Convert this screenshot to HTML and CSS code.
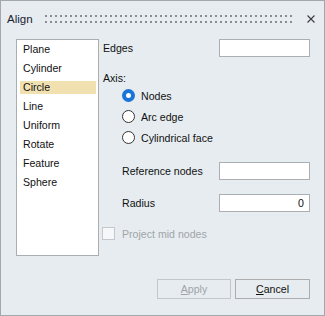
FILE: index.html
```html
<!DOCTYPE html>
<html lang="en">
<head>
	<meta charset="UTF-8">
	<title>Align</title>
	<link rel="stylesheet" href="styles.css">
</head>
<body>
	<div class="window">
		<div class="titlebar">
			<span class="title">Align</span>
			<div class="grip">
				<div class="dots"></div>
				<div class="dots"></div>
			</div>
			<svg class="close" width="8" height="8" viewBox="0 0 8 8">
				<path d="M0.5 0.5 L7.5 7.5 M7.5 0.5 L0.5 7.5" stroke="#3c3c3c" stroke-width="1.1" fill="none"/>
			</svg>
		</div>

		<div class="content">
			<ul class="list">
				<li>Plane</li>
				<li>Cylinder</li>
				<li class="selected">Circle</li>
				<li>Line</li>
				<li>Uniform</li>
				<li>Rotate</li>
				<li>Feature</li>
				<li>Sphere</li>
			</ul>

			<div class="panel">
				<div class="row">
					<span>Edges</span>
					<div class="field"></div>
				</div>

				<div class="axis-label">Axis:</div>
				<div class="radios">
					<div class="radio-row"><span class="radio checked"></span>Nodes</div>
					<div class="radio-row"><span class="radio"></span>Arc edge</div>
					<div class="radio-row"><span class="radio"></span>Cylindrical face</div>
				</div>

				<div class="row indent ref-row">
					<span>Reference nodes</span>
					<div class="field"></div>
				</div>
				<div class="row indent radius-row">
					<span>Radius</span>
					<div class="field number">0</div>
				</div>

				<div class="check-row">
					<span class="checkbox"></span>Project mid nodes
				</div>
			</div>
		</div>

		<div class="footer">
			<button class="btn disabled"><u>A</u>pply</button>
			<button class="btn"><u>C</u>ancel</button>
		</div>
	</div>
</body>
</html>
```

FILE: styles.css
```css
* {
	margin: 0;
	padding: 0;
	box-sizing: border-box;
}

body {
	font-family: "Liberation Sans", Arial, sans-serif;
	font-size: 10.6px;
	color: #111;
	background: #e6ecf0;
}

.window {
	width: 325px;
	height: 316px;
	border: 1px solid #a2a8ac;
	background: #e6ecf0;
	display: flex;
	flex-direction: column;
}

/* title bar */
.titlebar {
	height: 36px;
	display: flex;
	align-items: center;
	padding: 0 9px 0 6px;
}

.title {
	width: 38px;
	font-size: 11.5px;
	color: #1c2233;
}

.grip {
	width: 248px;
	display: flex;
	flex-direction: column;
	gap: 4px;
}

.dots {
	height: 2px;
	background: linear-gradient(90deg, #878d92 0 2px, transparent 2px 5px);
	background-size: 5px 2px;
}

.close {
	margin-left: auto;
}

/* body */
.content {
	display: flex;
	padding: 2px 14px 0 15px;
}

.list {
	list-style: none;
	width: 83px;
	height: 217px;
	border: 1px solid #a9aeb2;
	background: #fff;
	padding-top: 3px;
}

.list li {
	height: 13px;
	line-height: 13px;
	margin: 0 2px 6px 3px;
	padding-left: 3px;
}

.list li.selected {
	background: #f2e1b0;
}

.panel {
	flex: 1;
	margin-left: 4px;
	display: flex;
	flex-direction: column;
}

.row {
	display: flex;
	justify-content: space-between;
	align-items: center;
	height: 18px;
}

.row.indent {
	padding-left: 19px;
}

.field {
	width: 91px;
	height: 18px;
	border: 1px solid #abafb3;
	background: #fff;
}

.field.number {
	text-align: right;
	padding-right: 5px;
	line-height: 16px;
}

.axis-label {
	margin-top: 15px;
	height: 13px;
	line-height: 13px;
}

.radios {
	padding-left: 19px;
}

.radio-row {
	display: flex;
	align-items: center;
	height: 21px;
}

.radio {
	width: 13px;
	height: 13px;
	border: 1px solid #333;
	border-radius: 50%;
	background: #fff;
	margin-right: 6px;
}

.radio.checked {
	border: 4px solid #1a73d9;
	background: #fff;
}

.ref-row {
	margin-top: 14px;
}

.radius-row {
	margin-top: 14px;
}

.check-row {
	margin-top: 15px;
	margin-left: -1px;
	display: flex;
	align-items: center;
	height: 13px;
	color: #a1a5a8;
}

.checkbox {
	width: 13px;
	height: 13px;
	border: 1px solid #c4c8cb;
	background: #f5f7f8;
	margin-right: 7px;
}

/* buttons */
.footer {
	display: flex;
	justify-content: flex-end;
	gap: 4px;
	margin-top: 23px;
	padding-right: 14px;
}

.btn {
	width: 75px;
	height: 20px;
	font: inherit;
	color: #111;
	background: #e6ecf0;
	border: 1px solid #adadad;
}

.btn.disabled {
	width: 74px;
	color: #a0a4a7;
	border-color: #c4c7ca;
}
```
